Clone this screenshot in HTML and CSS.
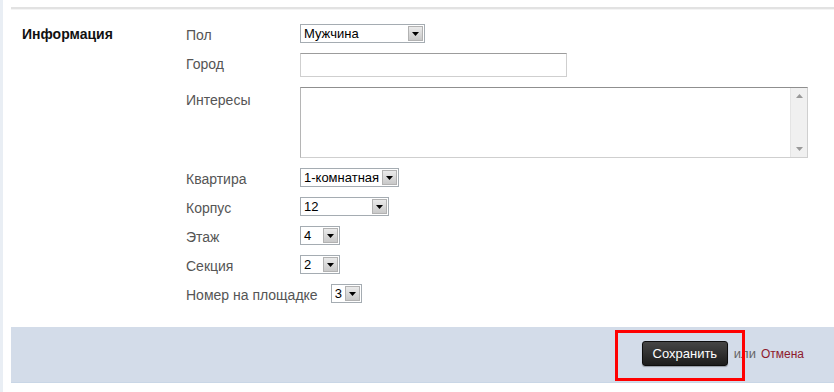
FILE: index.html
```html
<!DOCTYPE html>
<html lang="ru">
<head>
<meta charset="utf-8">
<title>Информация</title>
<link rel="stylesheet" href="styles.css">
</head>
<body>
<div class="page">
  <div class="content">
    <div class="topline"></div>
    <section class="info">
      <h2 class="heading">Информация</h2>
      <div class="fields">
        <div class="row">
          <label class="label">Пол</label>
          <div class="select w125"><span class="val">Мужчина</span><span class="arrow"><svg width="7" height="4" viewBox="0 0 7 4"><path d="M0 0h7L3.5 4z" fill="#000"/></svg></span></div>
        </div>
        <div class="row">
          <label class="label">Город</label>
          <div class="input"></div>
        </div>
        <div class="row">
          <label class="label lab-ta">Интересы</label>
          <div class="textarea">
            <div class="scroll">
              <svg width="7" height="4" viewBox="0 0 7 4"><path d="M3.5 0L7 4H0z" fill="#999"/></svg>
              <svg width="7" height="4" viewBox="0 0 7 4"><path d="M0 0h7L3.5 4z" fill="#999"/></svg>
            </div>
          </div>
        </div>
        <div class="row">
          <label class="label">Квартира</label>
          <div class="select w99"><span class="val">1-комнатная</span><span class="arrow"><svg width="7" height="4" viewBox="0 0 7 4"><path d="M0 0h7L3.5 4z" fill="#000"/></svg></span></div>
        </div>
        <div class="row">
          <label class="label">Корпус</label>
          <div class="select w89"><span class="val">12</span><span class="arrow"><svg width="7" height="4" viewBox="0 0 7 4"><path d="M0 0h7L3.5 4z" fill="#000"/></svg></span></div>
        </div>
        <div class="row">
          <label class="label">Этаж</label>
          <div class="select w40"><span class="val">4</span><span class="arrow"><svg width="7" height="4" viewBox="0 0 7 4"><path d="M0 0h7L3.5 4z" fill="#000"/></svg></span></div>
        </div>
        <div class="row">
          <label class="label">Секция</label>
          <div class="select w40"><span class="val">2</span><span class="arrow"><svg width="7" height="4" viewBox="0 0 7 4"><path d="M0 0h7L3.5 4z" fill="#000"/></svg></span></div>
        </div>
        <div class="row row-last">
          <label class="label lab-auto">Номер на площадке</label>
          <div class="select w31"><span class="val">3</span><span class="arrow"><svg width="7" height="4" viewBox="0 0 7 4"><path d="M0 0h7L3.5 4z" fill="#000"/></svg></span></div>
        </div>
      </div>
    </section>
    <footer class="actions">
      <div class="btn-wrap">
        <button class="btn" type="button">Сохранить</button>
        <span class="highlight"></span>
      </div>
      <span class="or">или</span>
      <a class="cancel" href="#">Отмена</a>
    </footer>
  </div>
</div>
</body>
</html>
```

FILE: styles.css
```css
* { box-sizing: border-box; }
html, body { margin: 0; padding: 0; background: #fff; }
body {
  font-family: "Liberation Sans", Arial, sans-serif;
  font-size: 13px;
  color: #000;
}
.page {
  border-left: 3px solid #e9eef4;
  min-height: 392px;
}
.content {
  padding-left: 8px;
  padding-top: 7px;
}
.topline {
  height: 3px;
  border-top: 2px solid #e2e2e2;
  border-bottom: 1px solid #f4f4f4;
}
.info {
  display: flex;
  padding: 14px 0 0 11px;
}
.heading {
  margin: 0;
  width: 164px;
  font-size: 14px;
  font-weight: bold;
  line-height: 16px;
  padding-top: 2px;
  color: #111;
}
.fields {
  display: flex;
  flex-direction: column;
  gap: 10px;
}
.row {
  display: flex;
  align-items: flex-start;
}
.label {
  width: 114px;
  color: #555;
  font-size: 14px;
  line-height: 16px;
  padding-top: 3px;
  flex: none;
}
.lab-ta { padding-top: 5px; }
.lab-auto { width: auto; margin-right: 13px; }
.select {
  height: 19px;
  border: 1px solid #a5acb2;
  background: #fff;
  display: flex;
  align-items: center;
  padding: 1px;
}
.select .val {
  flex: 1;
  padding-left: 2px;
  line-height: 15px;
  white-space: nowrap;
  overflow: hidden;
  color: #000;
}
.select .arrow {
  width: 15px;
  height: 15px;
  flex: none;
  border: 1px solid #b2b2b2;
  background: linear-gradient(#eaeaea, #c9c9c9);
  display: flex;
  align-items: center;
  justify-content: center;
}
.w125 { width: 125px; }
.w99 { width: 99px; }
.w89 { width: 89px; }
.w40 { width: 40px; }
.w31 { width: 31px; }
.input {
  width: 267px;
  height: 24px;
  border: 1px solid #cfcfcf;
  border-top-color: #9c9c9c;
}
.textarea {
  width: 508px;
  height: 71px;
  border: 1px solid #cfcfcf;
  border-top-color: #8f8f8f;
  border-left-color: #b5b5b5;
  display: flex;
  justify-content: flex-end;
}
.scroll {
  width: 17px;
  height: 100%;
  background: #f0f0f0;
  border-left: 1px solid #e4e4e4;
  display: flex;
  flex-direction: column;
  justify-content: space-between;
  align-items: center;
  padding: 6px 0;
}
.actions {
  margin-top: 24px;
  height: 56px;
  background: #d3dce9;
  border-bottom: 1px solid #c9d6e6;
  display: flex;
  align-items: center;
  justify-content: flex-end;
  padding-right: 30px;
  padding-bottom: 2px;
}
.btn-wrap {
  position: relative;
  margin-right: 6px;
}
.btn {
  display: block;
  width: 86px;
  height: 25px;
  border: 1px solid #0d0d0d;
  border-radius: 3px;
  background: linear-gradient(#454545, #1c1c1c);
  color: #fff;
  font-family: "Liberation Sans", Arial, sans-serif;
  font-size: 13px;
  padding: 0;
  box-shadow: 0 1px 1px rgba(0,0,0,0.3);
}
.highlight {
  position: absolute;
  left: -27px;
  top: -11px;
  width: 130px;
  height: 51px;
  border: 3px solid #ff0000;
}
.or { color: #666; margin-right: 5px; }
.cancel { color: #8e1a2c; text-decoration: none; font-size: 12px; }
```
